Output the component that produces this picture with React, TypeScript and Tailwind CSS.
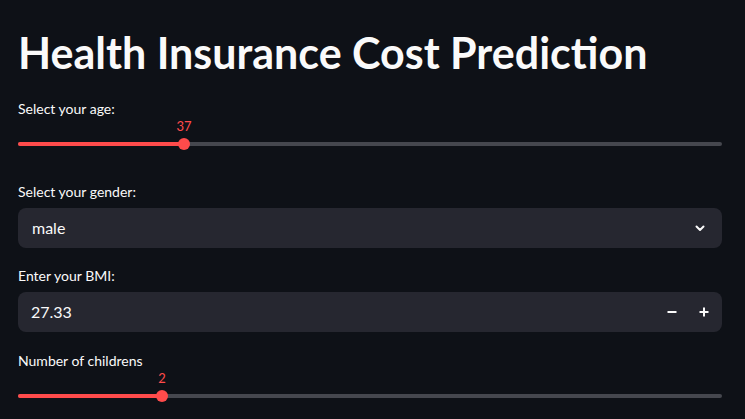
import React from "react";

const font = { fontFamily: "Lato, 'Noto Sans', sans-serif" };

function Slider({ label, value, thumbX }: { label: string; value: string; thumbX: number }) {
  return (
    <div className="flex flex-col">
      <div className="h-[20px] flex items-center text-[14px] text-[#fafafa]">{label}</div>
      <div className="relative h-[16px]">
        <span
          className="absolute top-0 -translate-x-1/2 text-[13px] leading-[16px] text-[#ff4b4b]"
          style={{ left: thumbX }}
        >
          {value}
        </span>
      </div>
      <div className="relative h-[20px] flex items-center">
        <div className="w-full h-[4px] rounded-full bg-[#45474e]" />
        <div
          className="absolute left-0 h-[4px] rounded-full bg-[#ff4b4b]"
          style={{ width: thumbX }}
        />
        <div
          className="absolute w-[12px] h-[12px] rounded-full bg-[#ff4b4b] -translate-x-1/2"
          style={{ left: thumbX }}
        />
      </div>
    </div>
  );
}

export default function App() {
  return (
    <div className="w-[745px] h-[419px] overflow-hidden bg-[#0e1117] text-[#fafafa]" style={font}>
      <div className="pl-[18px] pr-[23px] pt-[26px] flex flex-col">
        <h1 className="text-[43px] leading-[52px] font-bold text-[#fafafa] h-[72px] pt-[1px]">
          Health Insurance Cost Prediction
        </h1>
        <Slider label="Select your age:" value="37" thumbX={166} />
        <div className="h-[27px]" />
        <div className="h-[20px] flex items-center text-[14px]">Select your gender:</div>
        <div className="h-[7px]" />
        <div className="h-[40px] rounded-[8px] bg-[#262730] flex items-center justify-between pl-[14px] pr-[16px]">
          <span className="text-[16px]">male</span>
          <svg width="12" height="12" viewBox="0 0 24 24" fill="none" stroke="#fafafa" strokeWidth="4" strokeLinecap="round" strokeLinejoin="round">
            <path d="M5 9l7 7 7-7" />
          </svg>
        </div>
        <div className="h-[17px]" />
        <div className="h-[20px] flex items-center text-[14px]">Enter your BMI:</div>
        <div className="h-[7px]" />
        <div className="h-[40px] rounded-[8px] bg-[#262730] flex items-center justify-between pl-[13px] pr-[12px]">
          <span className="text-[16px]">27.33</span>
          <div className="flex items-center gap-[20px]">
            <svg width="12" height="12" viewBox="0 0 24 24" fill="none" stroke="#fafafa" strokeWidth="4">
              <path d="M3 12h18" />
            </svg>
            <svg width="12" height="12" viewBox="0 0 24 24" fill="none" stroke="#fafafa" strokeWidth="4">
              <path d="M3 12h18M12 3v18" />
            </svg>
          </div>
        </div>
        <div className="h-[18px]" />
        <Slider label="Number of childrens" value="2" thumbX={144} />
      </div>
    </div>
  );
}
